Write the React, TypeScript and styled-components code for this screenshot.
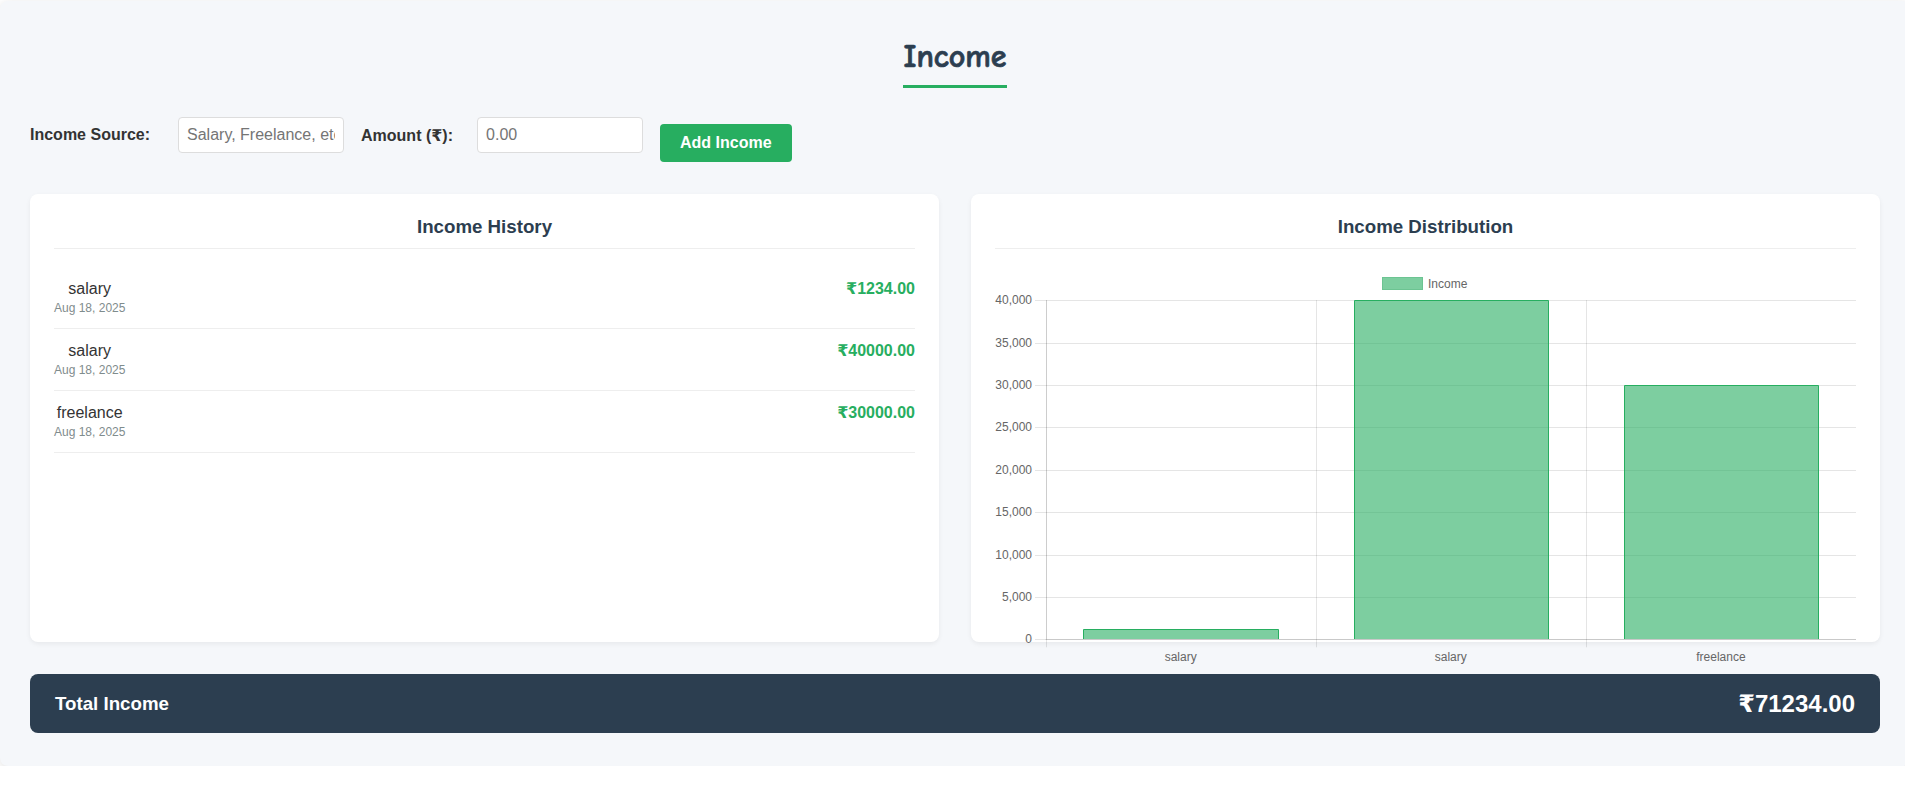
import React from 'react';
import styled, { createGlobalStyle } from 'styled-components';

const GlobalStyle = createGlobalStyle`
  html, body { margin: 0; padding: 0; background: #ffffff; overflow-x: hidden; }
  body { font-family: "Liberation Sans", Arial, "DejaVu Sans", sans-serif; color: #333; }
  * { box-sizing: border-box; }
`;

const Container = styled.div`
  width: calc(100% + 5px);
  margin-top: 1px;
  padding: 35px 30px 33px;
  background: #f5f7fa;
  border-radius: 8px;
  box-shadow: 0 2px 10px rgba(0, 0, 0, 0.12);
`;

const Header = styled.header`
  text-align: center;
`;

const Title = styled.h1`
  display: inline-block;
  margin: 0;
  padding-bottom: 8px;
  border-bottom: 3px solid #27ae60;
  font-family: "Comic Sans MS", "Comic Neue", cursive;
  font-size: 32px;
  line-height: 41px;
  font-weight: bold;
  color: #2c3e50;
  -webkit-text-stroke: 0.7px #2c3e50;
`;

const Form = styled.form`
  display: flex;
  align-items: flex-start;
  gap: 17px;
  margin-top: 29px;
`;

const FieldGroup = styled.div`
  display: flex;
  align-items: center;
  gap: ${(p: { $gap?: number }) => p.$gap ?? 28}px;
`;

const Label = styled.label`
  font-size: 16px;
  font-weight: bold;
  color: #333;
`;

const Input = styled.input`
  width: 166px;
  height: 36px;
  padding: 0 8px;
  border: 1px solid #ddd;
  border-radius: 4px;
  background: #fff;
  font-family: "Liberation Sans", Arial, sans-serif;
  font-size: 16px;
  color: #333;
  outline: none;
  &::placeholder { color: #757575; }
`;

const AddButton = styled.button`
  margin-top: 7px;
  height: 38px;
  padding: 0 20px;
  border: none;
  border-radius: 4px;
  background: #27ae60;
  color: #fff;
  font-family: "Liberation Sans", Arial, sans-serif;
  font-size: 16px;
  font-weight: bold;
  cursor: pointer;
`;

const Panels = styled.div`
  display: grid;
  grid-template-columns: 1fr 1fr;
  gap: 32px;
  margin-top: 32px;
`;

const Card = styled.section`
  height: 448px;
  padding: 22px 24px;
  background: #fff;
  border-radius: 8px;
  box-shadow: 0 2px 5px rgba(0, 0, 0, 0.06);
`;

const CardTitle = styled.h3`
  margin: 0 0 18px;
  padding-bottom: 10px;
  border-bottom: 1px solid #eee;
  font-size: 18.72px;
  line-height: 21.5px;
  font-weight: bold;
  text-align: center;
  color: #2c3e50;
`;

const List = styled.ul`
  list-style: none;
  margin: 0;
  padding: 0;
`;

const Row = styled.li`
  display: flex;
  justify-content: space-between;
  align-items: flex-start;
  padding: 13px 0 12px;
  border-bottom: 1px solid #eee;
`;

const ItemInfo = styled.div`
  display: inline-flex;
  flex-direction: column;
  align-items: center;
`;

const ItemName = styled.span`
  font-size: 16px;
  line-height: 18.4px;
  color: #333;
`;

const ItemDate = styled.span`
  margin-top: 4px;
  font-size: 12px;
  line-height: 13.8px;
  color: #7f8c8d;
`;

const ItemAmount = styled.span`
  font-size: 16px;
  line-height: 18.4px;
  font-weight: bold;
  color: #27ae60;
`;

const ChartSvg = styled.svg`
  display: block;
  width: 100%;
  height: 400px;
  overflow: visible;
  font-family: "Liberation Sans", Arial, sans-serif;
`;

const TotalBar = styled.div`
  display: flex;
  justify-content: space-between;
  align-items: center;
  height: 59px;
  margin-top: 32px;
  padding: 0 25px;
  background: #2c3e50;
  border-radius: 8px;
  color: #fff;
`;

const TotalLabel = styled.h3`
  margin: 0;
  font-size: 18.72px;
  font-weight: bold;
`;

const TotalValue = styled.span`
  font-size: 24px;
  font-weight: bold;
`;

const incomes = [
  { source: 'salary', date: 'Aug 18, 2025', amount: 1234 },
  { source: 'salary', date: 'Aug 18, 2025', amount: 40000 },
  { source: 'freelance', date: 'Aug 18, 2025', amount: 30000 },
];

const W = 861;
const X0 = 50.6;
const Y0 = 372.3;
const YTOP = 33.1;
const STEP = 42.4; // px per 5,000
const CAT = (W - X0) / incomes.length;
const BAR = CAT * 0.72;

const fmt = (n: number) => n.toLocaleString('en-US');

function IncomeChart() {
  const ticks = [0, 5000, 10000, 15000, 20000, 25000, 30000, 35000, 40000];
  const yOf = (v: number) => Y0 - (v / 5000) * STEP;
  const r = (v: number) => Math.round(v) + 0.5;
  return (
    <ChartSvg viewBox={`0 0 ${W} 400`} preserveAspectRatio="none">
      <rect x={387.5} y={10.5} width={40} height={12} fill="rgba(39,174,96,0.6)" stroke="#6cc492" strokeWidth={1} />
      <text x={433} y={20.5} fontSize={12} fill="#666">Income</text>

      {ticks.map((t) => (
        <g key={t}>
          <line x1={40} x2={W} y1={r(yOf(t))} y2={r(yOf(t))} stroke="rgba(0,0,0,0.1)" strokeWidth={1} />
          <text x={37} y={yOf(t) + 4} fontSize={12} fill="#666" textAnchor="end">{fmt(t)}</text>
        </g>
      ))}
      {[0, 1, 2].map((i) => (
        <line key={i} x1={r(X0 + i * CAT)} x2={r(X0 + i * CAT)} y1={YTOP} y2={Y0 + 8} stroke="rgba(0,0,0,0.1)" strokeWidth={1} />
      ))}
      <line x1={r(X0)} x2={r(X0)} y1={YTOP} y2={Y0} stroke="rgba(0,0,0,0.1)" strokeWidth={1} />
      <line x1={X0} x2={W} y1={r(Y0)} y2={r(Y0)} stroke="rgba(0,0,0,0.12)" strokeWidth={1} />

      {incomes.map((d, i) => {
        const cx = X0 + CAT * (i + 0.5);
        const x1 = Math.round(cx - BAR / 2) + 0.5;
        const x2 = Math.round(cx + BAR / 2) + 0.5;
        const top = Math.round(yOf(d.amount)) + 0.5;
        const bottom = Math.round(Y0);
        return (
          <g key={i}>
            <rect x={x1} y={top} width={x2 - x1} height={bottom - top} fill="rgba(39,174,96,0.6)" />
            <path d={`M${x1} ${bottom} L${x1} ${top} L${x2} ${top} L${x2} ${bottom}`} fill="none" stroke="#27ae60" strokeWidth={1} />
            <text x={cx} y={393.5} fontSize={12} fill="#666" textAnchor="middle">{d.source}</text>
          </g>
        );
      })}
    </ChartSvg>
  );
}

export default function App() {
  const total = incomes.reduce((s, d) => s + d.amount, 0);
  return (
    <>
      <GlobalStyle />
      <Container>
        <Header>
          <Title>Income</Title>
        </Header>

        <Form onSubmit={(e) => e.preventDefault()}>
          <FieldGroup>
            <Label htmlFor="src">Income Source:</Label>
            <Input id="src" type="text" placeholder="Salary, Freelance, etc." />
          </FieldGroup>
          <FieldGroup $gap={24}>
            <Label htmlFor="amt">Amount (₹):</Label>
            <Input id="amt" type="text" placeholder="0.00" />
          </FieldGroup>
          <AddButton type="submit">Add Income</AddButton>
        </Form>

        <Panels>
          <Card>
            <CardTitle>Income History</CardTitle>
            <List>
              {incomes.map((d, i) => (
                <Row key={i}>
                  <ItemInfo>
                    <ItemName>{d.source}</ItemName>
                    <ItemDate>{d.date}</ItemDate>
                  </ItemInfo>
                  <ItemAmount>₹{d.amount.toFixed(2)}</ItemAmount>
                </Row>
              ))}
            </List>
          </Card>
          <Card>
            <CardTitle>Income Distribution</CardTitle>
            <IncomeChart />
          </Card>
        </Panels>

        <TotalBar>
          <TotalLabel>Total Income</TotalLabel>
          <TotalValue>₹{total.toFixed(2)}</TotalValue>
        </TotalBar>
      </Container>
    </>
  );
}
